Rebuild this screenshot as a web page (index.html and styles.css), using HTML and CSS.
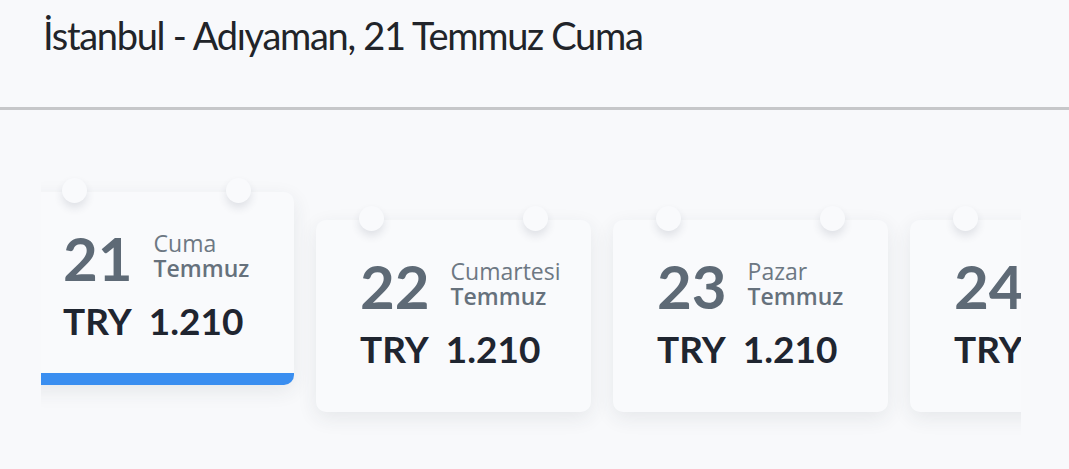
FILE: index.html
```html
<!DOCTYPE html>
<html lang="tr">
<head>
  <meta charset="UTF-8">
  <title>İstanbul - Adıyaman</title>
  <link rel="stylesheet" href="styles.css">
</head>
<body>
  <header class="trip-header">
    <h1>İstanbul - Adıyaman, 21 Temmuz Cuma</h1>
  </header>

  <div class="day-strip">
    <div class="day-row">
      <div class="day-card active">
        <span class="pin pin-left"></span>
        <span class="pin pin-right"></span>
        <div class="day-date">
          <span class="day-num">21</span>
          <span class="day-labels">
            <span class="day-name">Cuma</span>
            <span class="day-month">Temmuz</span>
          </span>
        </div>
        <div class="day-price"><span class="cur">TRY</span><span>1.210</span></div>
      </div>

      <div class="day-card">
        <span class="pin pin-left"></span>
        <span class="pin pin-right"></span>
        <div class="day-date">
          <span class="day-num">22</span>
          <span class="day-labels">
            <span class="day-name">Cumartesi</span>
            <span class="day-month">Temmuz</span>
          </span>
        </div>
        <div class="day-price"><span class="cur">TRY</span><span>1.210</span></div>
      </div>

      <div class="day-card">
        <span class="pin pin-left"></span>
        <span class="pin pin-right"></span>
        <div class="day-date">
          <span class="day-num">23</span>
          <span class="day-labels">
            <span class="day-name">Pazar</span>
            <span class="day-month">Temmuz</span>
          </span>
        </div>
        <div class="day-price"><span class="cur">TRY</span><span>1.210</span></div>
      </div>

      <div class="day-card">
        <span class="pin pin-left"></span>
        <span class="pin pin-right"></span>
        <div class="day-date">
          <span class="day-num">24</span>
          <span class="day-labels">
            <span class="day-name">Pazartesi</span>
            <span class="day-month">Temmuz</span>
          </span>
        </div>
        <div class="day-price"><span class="cur">TRY</span><span>1.210</span></div>
      </div>
    </div>
  </div>
</body>
</html>
```

FILE: styles.css
```css
body {
  margin: 0;
  background: #f8f9fb;
  font-family: Lato, "Noto Sans", sans-serif;
}

/* title bar */
.trip-header {
  box-sizing: border-box;
  height: 110px;
  padding: 12px 43px 0;
  border-bottom: 3px solid #c6c7c9;
}
.trip-header h1 {
  margin: 0;
  font-size: 38px;
  font-weight: 400;
  letter-spacing: -1.3px;
  line-height: 46px;
  color: #212429;
}

/* horizontally scrolled day cards */
.day-strip {
  width: 980px;
  margin-left: 41px;
  overflow: hidden;
  padding: 82px 0 40px;
}
.day-row {
  display: flex;
  align-items: flex-start;
  gap: 22px;
  margin-left: -22px;
}
.day-card {
  position: relative;
  flex: 0 0 275px;
  box-sizing: border-box;
  height: 192px;
  margin-top: 28px;
  padding: 36px 0 0 44px;
  background: #f9fafc;
  border-radius: 10px;
  box-shadow: 0 6px 20px rgba(40, 50, 70, 0.09);
}
.day-card.active {
  margin-top: 0;
  height: 193px;
  border-bottom: 12px solid #3a8ef0;
}

/* calendar rings */
.pin {
  position: absolute;
  top: -14px;
  width: 25px;
  height: 25px;
  border-radius: 50%;
  background: #f9fafc;
  box-shadow: 0 5px 8px rgba(40, 50, 70, 0.12);
}
.pin-left { left: 43px; }
.pin-right { right: 43px; }

.day-date {
  display: flex;
  align-items: flex-start;
  gap: 21px;
}
.day-num {
  font-size: 60px;
  font-weight: 700;
  line-height: 1;
  color: #5e6a76;
}
.day-labels {
  display: flex;
  flex-direction: column;
  margin-top: 3px;
  font-family: "Open Sans", Lato, sans-serif;
  font-size: 23px;
  line-height: 25px;
  color: #6d7883;
}
.day-month {
  font-weight: 600;
  color: #66717c;
}

.day-price {
  margin-top: 14px;
  font-size: 37px;
  font-weight: 700;
  line-height: 1;
  color: #1f2530;
}
.day-price .cur {
  margin-right: 17px;
}
```
